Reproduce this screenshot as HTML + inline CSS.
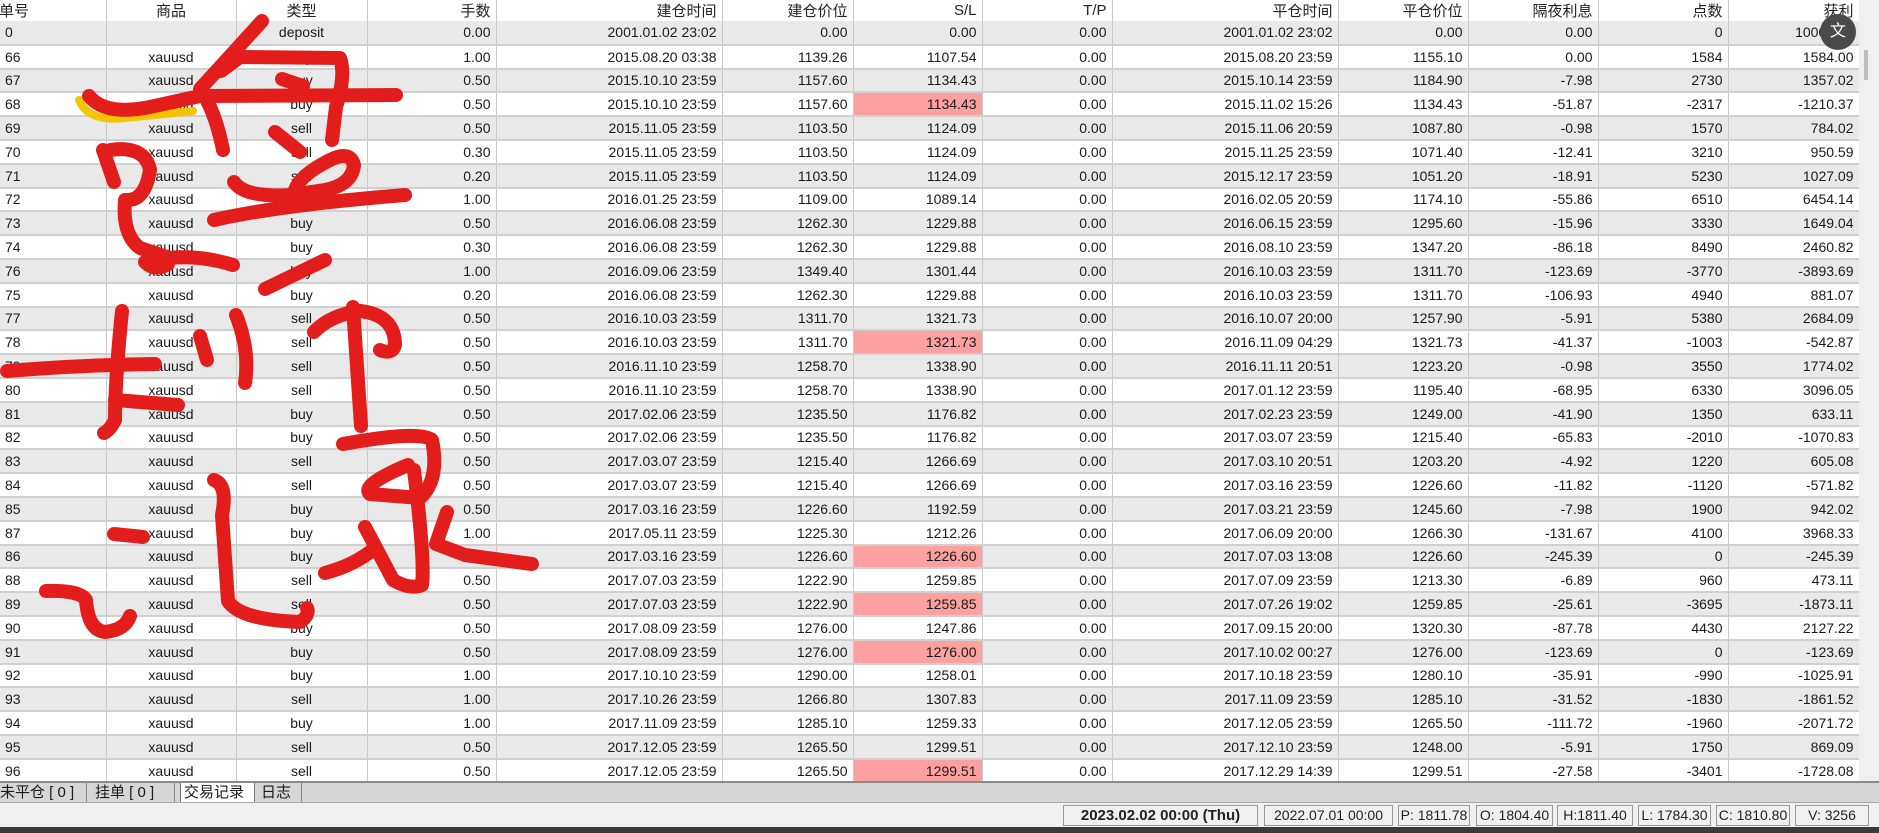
<!DOCTYPE html>
<html><head><meta charset="utf-8"><style>
*{margin:0;padding:0;box-sizing:border-box}
body{width:1879px;height:833px;overflow:hidden;background:#fff;font-family:"Liberation Sans","Noto Sans CJK SC",sans-serif;font-size:14px;color:#1a1a1a;position:relative}
table{position:absolute;left:0;top:0;border-collapse:collapse;table-layout:fixed;width:1859px}
td,th{height:23.8px;padding:0 5px;border-right:1px solid #c9c9c9;border-bottom:2px solid #d0d0d0;text-align:right;white-space:nowrap;overflow:hidden;font-weight:normal}
th{height:18px;border-bottom:none;background:#fff;font-size:15px;color:#222}
tr:nth-child(even) td{background:#e9e9e9}
td:nth-child(1),th:nth-child(1){text-align:left}
td:nth-child(2),td:nth-child(3),th:nth-child(2),th:nth-child(3){text-align:center}
td.p{background:#fda0a0!important}
#sb{position:absolute;left:1859px;top:0;width:20px;height:781px;background:#f0f0f0}
#thumb{position:absolute;left:1864px;top:50px;width:4px;height:30px;background:#bdbdbd}
#tabs{position:absolute;left:0;top:781px;width:1879px;height:21px;background:#d6d6d6;border-top:2px solid #8a8a8a}
.tab{position:absolute;top:0;height:19px;font-size:15px;line-height:19px;padding:0 3px;border-right:1px solid #888}
#status{position:absolute;left:0;top:802px;width:1879px;height:25px;background:#f0f0f0;border-top:1px solid #aaa}
.sb{position:absolute;top:2px;height:21px;border:1px solid #999;font-size:14px;line-height:19px;text-align:center;color:#222}
#dark{position:absolute;left:0;top:827px;width:1879px;height:6px;background:#3b3b3b}
</style></head><body>
<table>
<colgroup><col style="width:106px"><col style="width:130px"><col style="width:131px"><col style="width:129px"><col style="width:226px"><col style="width:131px"><col style="width:129px"><col style="width:130px"><col style="width:226px"><col style="width:130px"><col style="width:130px"><col style="width:130px"><col style="width:131px"></colgroup>
<tr><th style="text-indent:-6px">单号</th><th>商品</th><th>类型</th><th>手数</th><th>建仓时间</th><th>建仓价位</th><th>S/L</th><th>T/P</th><th>平仓时间</th><th>平仓价位</th><th>隔夜利息</th><th>点数</th><th>获利</th></tr>
<tr><td>0</td><td></td><td>deposit</td><td>0.00</td><td>2001.01.02 23:02</td><td>0.00</td><td>0.00</td><td>0.00</td><td>2001.01.02 23:02</td><td>0.00</td><td>0.00</td><td>0</td><td>10000.00</td></tr>
<tr><td>66</td><td>xauusd</td><td>buy</td><td>1.00</td><td>2015.08.20 03:38</td><td>1139.26</td><td>1107.54</td><td>0.00</td><td>2015.08.20 23:59</td><td>1155.10</td><td>0.00</td><td>1584</td><td>1584.00</td></tr>
<tr><td>67</td><td>xauusd</td><td>buy</td><td>0.50</td><td>2015.10.10 23:59</td><td>1157.60</td><td>1134.43</td><td>0.00</td><td>2015.10.14 23:59</td><td>1184.90</td><td>-7.98</td><td>2730</td><td>1357.02</td></tr>
<tr><td>68</td><td>xauusd</td><td>buy</td><td>0.50</td><td>2015.10.10 23:59</td><td>1157.60</td><td class="p">1134.43</td><td>0.00</td><td>2015.11.02 15:26</td><td>1134.43</td><td>-51.87</td><td>-2317</td><td>-1210.37</td></tr>
<tr><td>69</td><td>xauusd</td><td>sell</td><td>0.50</td><td>2015.11.05 23:59</td><td>1103.50</td><td>1124.09</td><td>0.00</td><td>2015.11.06 20:59</td><td>1087.80</td><td>-0.98</td><td>1570</td><td>784.02</td></tr>
<tr><td>70</td><td>xauusd</td><td>sell</td><td>0.30</td><td>2015.11.05 23:59</td><td>1103.50</td><td>1124.09</td><td>0.00</td><td>2015.11.25 23:59</td><td>1071.40</td><td>-12.41</td><td>3210</td><td>950.59</td></tr>
<tr><td>71</td><td>xauusd</td><td>sell</td><td>0.20</td><td>2015.11.05 23:59</td><td>1103.50</td><td>1124.09</td><td>0.00</td><td>2015.12.17 23:59</td><td>1051.20</td><td>-18.91</td><td>5230</td><td>1027.09</td></tr>
<tr><td>72</td><td>xauusd</td><td>buy</td><td>1.00</td><td>2016.01.25 23:59</td><td>1109.00</td><td>1089.14</td><td>0.00</td><td>2016.02.05 20:59</td><td>1174.10</td><td>-55.86</td><td>6510</td><td>6454.14</td></tr>
<tr><td>73</td><td>xauusd</td><td>buy</td><td>0.50</td><td>2016.06.08 23:59</td><td>1262.30</td><td>1229.88</td><td>0.00</td><td>2016.06.15 23:59</td><td>1295.60</td><td>-15.96</td><td>3330</td><td>1649.04</td></tr>
<tr><td>74</td><td>xauusd</td><td>buy</td><td>0.30</td><td>2016.06.08 23:59</td><td>1262.30</td><td>1229.88</td><td>0.00</td><td>2016.08.10 23:59</td><td>1347.20</td><td>-86.18</td><td>8490</td><td>2460.82</td></tr>
<tr><td>76</td><td>xauusd</td><td>buy</td><td>1.00</td><td>2016.09.06 23:59</td><td>1349.40</td><td>1301.44</td><td>0.00</td><td>2016.10.03 23:59</td><td>1311.70</td><td>-123.69</td><td>-3770</td><td>-3893.69</td></tr>
<tr><td>75</td><td>xauusd</td><td>buy</td><td>0.20</td><td>2016.06.08 23:59</td><td>1262.30</td><td>1229.88</td><td>0.00</td><td>2016.10.03 23:59</td><td>1311.70</td><td>-106.93</td><td>4940</td><td>881.07</td></tr>
<tr><td>77</td><td>xauusd</td><td>sell</td><td>0.50</td><td>2016.10.03 23:59</td><td>1311.70</td><td>1321.73</td><td>0.00</td><td>2016.10.07 20:00</td><td>1257.90</td><td>-5.91</td><td>5380</td><td>2684.09</td></tr>
<tr><td>78</td><td>xauusd</td><td>sell</td><td>0.50</td><td>2016.10.03 23:59</td><td>1311.70</td><td class="p">1321.73</td><td>0.00</td><td>2016.11.09 04:29</td><td>1321.73</td><td>-41.37</td><td>-1003</td><td>-542.87</td></tr>
<tr><td>79</td><td>xauusd</td><td>sell</td><td>0.50</td><td>2016.11.10 23:59</td><td>1258.70</td><td>1338.90</td><td>0.00</td><td>2016.11.11 20:51</td><td>1223.20</td><td>-0.98</td><td>3550</td><td>1774.02</td></tr>
<tr><td>80</td><td>xauusd</td><td>sell</td><td>0.50</td><td>2016.11.10 23:59</td><td>1258.70</td><td>1338.90</td><td>0.00</td><td>2017.01.12 23:59</td><td>1195.40</td><td>-68.95</td><td>6330</td><td>3096.05</td></tr>
<tr><td>81</td><td>xauusd</td><td>buy</td><td>0.50</td><td>2017.02.06 23:59</td><td>1235.50</td><td>1176.82</td><td>0.00</td><td>2017.02.23 23:59</td><td>1249.00</td><td>-41.90</td><td>1350</td><td>633.11</td></tr>
<tr><td>82</td><td>xauusd</td><td>buy</td><td>0.50</td><td>2017.02.06 23:59</td><td>1235.50</td><td>1176.82</td><td>0.00</td><td>2017.03.07 23:59</td><td>1215.40</td><td>-65.83</td><td>-2010</td><td>-1070.83</td></tr>
<tr><td>83</td><td>xauusd</td><td>sell</td><td>0.50</td><td>2017.03.07 23:59</td><td>1215.40</td><td>1266.69</td><td>0.00</td><td>2017.03.10 20:51</td><td>1203.20</td><td>-4.92</td><td>1220</td><td>605.08</td></tr>
<tr><td>84</td><td>xauusd</td><td>sell</td><td>0.50</td><td>2017.03.07 23:59</td><td>1215.40</td><td>1266.69</td><td>0.00</td><td>2017.03.16 23:59</td><td>1226.60</td><td>-11.82</td><td>-1120</td><td>-571.82</td></tr>
<tr><td>85</td><td>xauusd</td><td>buy</td><td>0.50</td><td>2017.03.16 23:59</td><td>1226.60</td><td>1192.59</td><td>0.00</td><td>2017.03.21 23:59</td><td>1245.60</td><td>-7.98</td><td>1900</td><td>942.02</td></tr>
<tr><td>87</td><td>xauusd</td><td>buy</td><td>1.00</td><td>2017.05.11 23:59</td><td>1225.30</td><td>1212.26</td><td>0.00</td><td>2017.06.09 20:00</td><td>1266.30</td><td>-131.67</td><td>4100</td><td>3968.33</td></tr>
<tr><td>86</td><td>xauusd</td><td>buy</td><td>0.50</td><td>2017.03.16 23:59</td><td>1226.60</td><td class="p">1226.60</td><td>0.00</td><td>2017.07.03 13:08</td><td>1226.60</td><td>-245.39</td><td>0</td><td>-245.39</td></tr>
<tr><td>88</td><td>xauusd</td><td>sell</td><td>0.50</td><td>2017.07.03 23:59</td><td>1222.90</td><td>1259.85</td><td>0.00</td><td>2017.07.09 23:59</td><td>1213.30</td><td>-6.89</td><td>960</td><td>473.11</td></tr>
<tr><td>89</td><td>xauusd</td><td>sell</td><td>0.50</td><td>2017.07.03 23:59</td><td>1222.90</td><td class="p">1259.85</td><td>0.00</td><td>2017.07.26 19:02</td><td>1259.85</td><td>-25.61</td><td>-3695</td><td>-1873.11</td></tr>
<tr><td>90</td><td>xauusd</td><td>buy</td><td>0.50</td><td>2017.08.09 23:59</td><td>1276.00</td><td>1247.86</td><td>0.00</td><td>2017.09.15 20:00</td><td>1320.30</td><td>-87.78</td><td>4430</td><td>2127.22</td></tr>
<tr><td>91</td><td>xauusd</td><td>buy</td><td>0.50</td><td>2017.08.09 23:59</td><td>1276.00</td><td class="p">1276.00</td><td>0.00</td><td>2017.10.02 00:27</td><td>1276.00</td><td>-123.69</td><td>0</td><td>-123.69</td></tr>
<tr><td>92</td><td>xauusd</td><td>buy</td><td>1.00</td><td>2017.10.10 23:59</td><td>1290.00</td><td>1258.01</td><td>0.00</td><td>2017.10.18 23:59</td><td>1280.10</td><td>-35.91</td><td>-990</td><td>-1025.91</td></tr>
<tr><td>93</td><td>xauusd</td><td>sell</td><td>1.00</td><td>2017.10.26 23:59</td><td>1266.80</td><td>1307.83</td><td>0.00</td><td>2017.11.09 23:59</td><td>1285.10</td><td>-31.52</td><td>-1830</td><td>-1861.52</td></tr>
<tr><td>94</td><td>xauusd</td><td>buy</td><td>1.00</td><td>2017.11.09 23:59</td><td>1285.10</td><td>1259.33</td><td>0.00</td><td>2017.12.05 23:59</td><td>1265.50</td><td>-111.72</td><td>-1960</td><td>-2071.72</td></tr>
<tr><td>95</td><td>xauusd</td><td>sell</td><td>0.50</td><td>2017.12.05 23:59</td><td>1265.50</td><td>1299.51</td><td>0.00</td><td>2017.12.10 23:59</td><td>1248.00</td><td>-5.91</td><td>1750</td><td>869.09</td></tr>
<tr><td>96</td><td>xauusd</td><td>sell</td><td>0.50</td><td>2017.12.05 23:59</td><td>1265.50</td><td class="p">1299.51</td><td>0.00</td><td>2017.12.29 14:39</td><td>1299.51</td><td>-27.58</td><td>-3401</td><td>-1728.08</td></tr>
</table>
<div id="sb"></div><div id="thumb"></div>
<div style="position:absolute;left:1820px;top:14px;width:36px;height:36px;border-radius:50%;background:#4a4a4a;color:#fff;font-size:16px;line-height:36px;text-align:center">文</div>
<div id="tabs">
<div class="tab" style="left:0;width:87px;text-indent:-3px">未平仓 [ 0 ]</div>
<div class="tab" style="left:92px;width:83px">挂单 [ 0 ]</div>
<div class="tab" style="left:180px;width:75px;background:#fff;height:21px;border:1px solid #777;border-top:none">交易记录</div>
<div class="tab" style="left:258px;width:44px">日志</div>
</div>
<div id="status">
<div class="sb" style="left:1063px;width:195px;font-weight:bold;font-size:15px">2023.02.02 00:00 (Thu)</div>
<div class="sb" style="left:1264px;width:129px">2022.07.01 00:00</div>
<div class="sb" style="left:1398px;width:72px">P: 1811.78</div>
<div class="sb" style="left:1476px;width:77px">O: 1804.40</div>
<div class="sb" style="left:1557px;width:76px">H:1811.40</div>
<div class="sb" style="left:1638px;width:73px">L: 1784.30</div>
<div class="sb" style="left:1716px;width:74px">C: 1810.80</div>
<div class="sb" style="left:1795px;width:74px">V: 3256</div>
</div>
<div id="dark"></div>
<svg style="position:absolute;left:0;top:0" width="1879" height="833" fill="none" stroke-linecap="round" stroke-linejoin="round">
<path d="M79,100 Q88,122 125,118 L193,111" stroke="#f5c400" stroke-width="8"/>
<g stroke="#e31c1c" stroke-width="14">
<path d="M262,21 L232,54 L200,89 Q215,110 223,150"/>
<path d="M221,71 L240,57 L340,58 Q346,75 336,107 L332,140"/>
<path d="M89,96 Q105,116 150,107 L200,96 L396,95"/>
<path d="M282,79 L303,86"/>
<path d="M275,132 L300,152"/>
<path d="M234,182 Q245,198 290,195 L325,190 Q352,185 354,165 Q350,150 330,160 Q300,175 295,190"/>
<path d="M214,220 Q280,205 405,195"/>
<path d="M103,150 L114,182"/>
<path d="M110,150 Q145,145 150,170 Q145,200 128,200"/>
<path d="M125,200 Q122,235 140,248 L170,258 Q200,255 233,265"/>
<path d="M145,262 Q155,272 168,264"/>
<path d="M265,289 L325,260"/>
<path d="M7,371 Q80,365 155,364"/>
<path d="M122,311 Q115,380 115,420 Q110,430 104,433"/>
<path d="M115,400 L178,405"/>
<path d="M200,336 L207,360"/>
<path d="M236,315 Q250,350 245,383"/>
<path d="M314,332 Q330,315 360,311 Q395,315 395,345 Q392,355 380,350"/>
<path d="M353,307 L361,426"/>
<path d="M114,534 L143,537"/>
<path d="M46,591 Q80,590 86,600 Q88,630 105,632 Q125,630 130,616"/>
<path d="M214,480 Q228,485 222,515 L228,601 Q240,620 300,622 Q310,615 307,608"/>
<path d="M343,444 Q420,430 432,440 Q440,480 420,498 L370,494 Q360,485 408,465"/>
<path d="M414,470 Q425,560 422,585 Q410,590 393,580 L365,527"/>
<path d="M325,573 Q355,565 375,548"/>
<path d="M447,512 L436,544 L465,555 L532,564"/>
</g>
</svg>
</body></html>
